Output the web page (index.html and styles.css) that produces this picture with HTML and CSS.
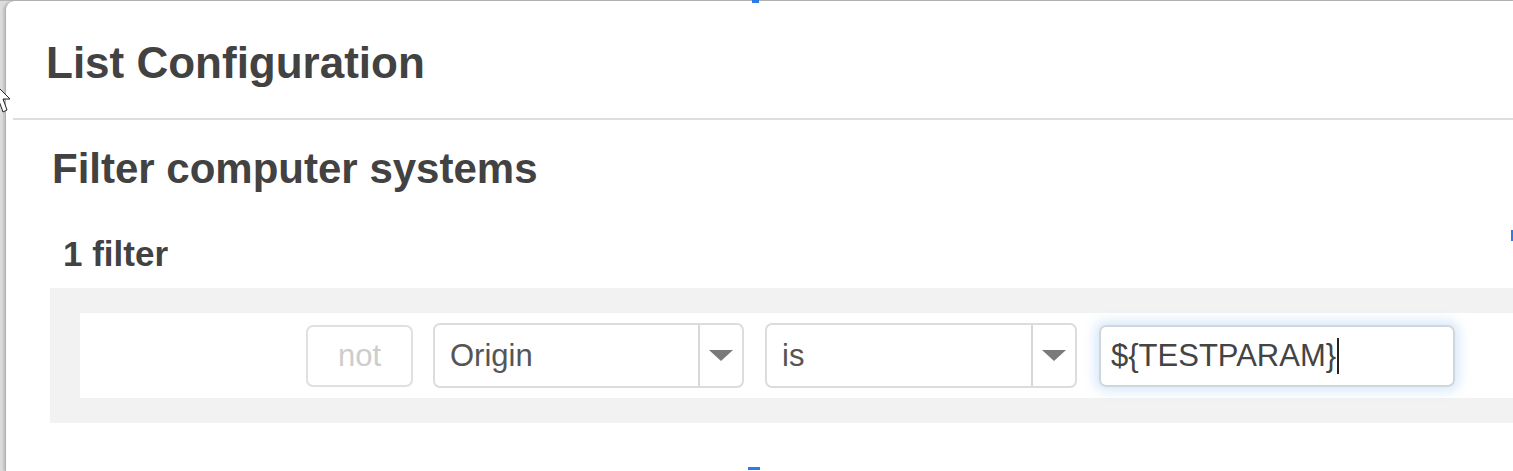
FILE: index.html
```html
<!DOCTYPE html>
<html>
<head>
<meta charset="utf-8">
<link rel="stylesheet" href="styles.css">
</head>
<body>
<div class="page">
  <div class="dialog">
    <div class="header">
      <h1 class="title">List Configuration</h1>
    </div>
    <div class="body">
      <h2 class="subtitle">Filter computer systems</h2>
      <div class="count">1 filter</div>
      <div class="panel">
        <div class="row">
          <div class="not-btn">not</div>
          <div class="select">
            <span class="select-text">Origin</span>
            <span class="select-arrow"><span class="tri"></span></span>
          </div>
          <div class="select">
            <span class="select-text">is</span>
            <span class="select-arrow"><span class="tri"></span></span>
          </div>
          <div class="input">${TESTPARAM}<span class="caret"></span></div>
        </div>
      </div>
    </div>
  </div>
  <span class="handle handle-top"></span>
  <span class="handle handle-bottom"></span>
  <span class="handle handle-right"></span>
  <svg class="cursor" width="14" height="40" viewBox="0 0 14 40">
    <path d="M-8 0 L10 18 L3 18 L7 29 L3 31 L-1 20 L-8 26 Z" fill="#fff" stroke="#222" stroke-width="1"/>
  </svg>
</div>
</body>
</html>
```

FILE: styles.css
```css
* { box-sizing: border-box; }
html, body { margin: 0; padding: 0; }
body {
  background: #dcdcdc;
  font-family: "Liberation Sans", Arial, sans-serif;
  width: 1513px;
  height: 471px;
  overflow: hidden;
}
.page {
  position: relative;
  height: 471px;
  padding-left: 5px;
  display: flex;
  border-top: 1px solid #b5b5b5;
}
.dialog {
  flex: 1;
  background: #fff;
  border-left: 1px solid #b0b0b0;
  border-top-left-radius: 9px;
  box-shadow: -2px 0 2px rgba(0,0,0,0.12);
  display: flex;
  flex-direction: column;
}
.header {
  margin-left: 7px;
  padding: 37px 0 30px 33px;
  border-bottom: 2px solid #dedede;
}
.title {
  margin: 0;
  font-size: 44px;
  line-height: 50px;
  font-weight: bold;
  color: #424242;
}
.body {
  padding-left: 44px;
}
.subtitle {
  margin: 25px 0 0 2px;
  font-size: 42px;
  line-height: 48px;
  font-weight: bold;
  color: #424242;
}
.count {
  margin: 41px 0 0 13px;
  font-size: 35px;
  line-height: 40px;
  font-weight: bold;
  color: #424242;
}
.panel {
  margin: 14px 0 0 0;
  background: #f2f2f2;
  padding: 25px 0 25px 30px;
}
.row {
  background: #fff;
  height: 85px;
  display: flex;
  align-items: center;
  padding-left: 226px;
}
.not-btn {
  width: 107px;
  height: 62px;
  border: 2px solid #e0e0e0;
  border-radius: 7px;
  display: flex;
  align-items: center;
  justify-content: center;
  font-size: 31px;
  color: #cdcdcd;
  margin-right: 20px;
}
.select {
  width: 311px;
  height: 65px;
  border: 2px solid #dcdcdc;
  border-radius: 7px;
  display: flex;
  align-items: center;
  margin-right: 21px;
  background: #fff;
}
.select + .select { width: 312px; margin-right: 22px; }
.select-text {
  flex: 1;
  padding-left: 15px;
  font-size: 31px;
  color: #555;
}
.select-arrow {
  width: 44px;
  align-self: stretch;
  border-left: 2px solid #d8d8d8;
  display: flex;
  align-items: center;
  justify-content: center;
}
.tri {
  width: 0;
  height: 0;
  border-left: 12px solid transparent;
  border-right: 12px solid transparent;
  border-top: 11px solid #7a7a7a;
}
.input {
  width: 356px;
  height: 62px;
  border: 2px solid #cfd6dc;
  border-radius: 7px;
  box-shadow: 0 0 12px 4px rgba(120, 180, 235, 0.3);
  display: flex;
  align-items: center;
  padding-left: 10px;
  font-size: 31px;
  color: #444;
}
.caret {
  display: inline-block;
  width: 2px;
  height: 36px;
  background: #222;
  margin-left: 1px;
}
.handle {
  position: absolute;
  background: #2f7be6;
}
.handle-top { left: 752px; top: -1px; width: 7px; height: 3px; }
.handle-bottom { left: 748px; top: 466px; width: 12px; height: 3px; }
.handle-right { left: 1511px; top: 229px; width: 2px; height: 11px; }
.cursor {
  position: absolute;
  left: 0;
  top: 80px;
}
```
